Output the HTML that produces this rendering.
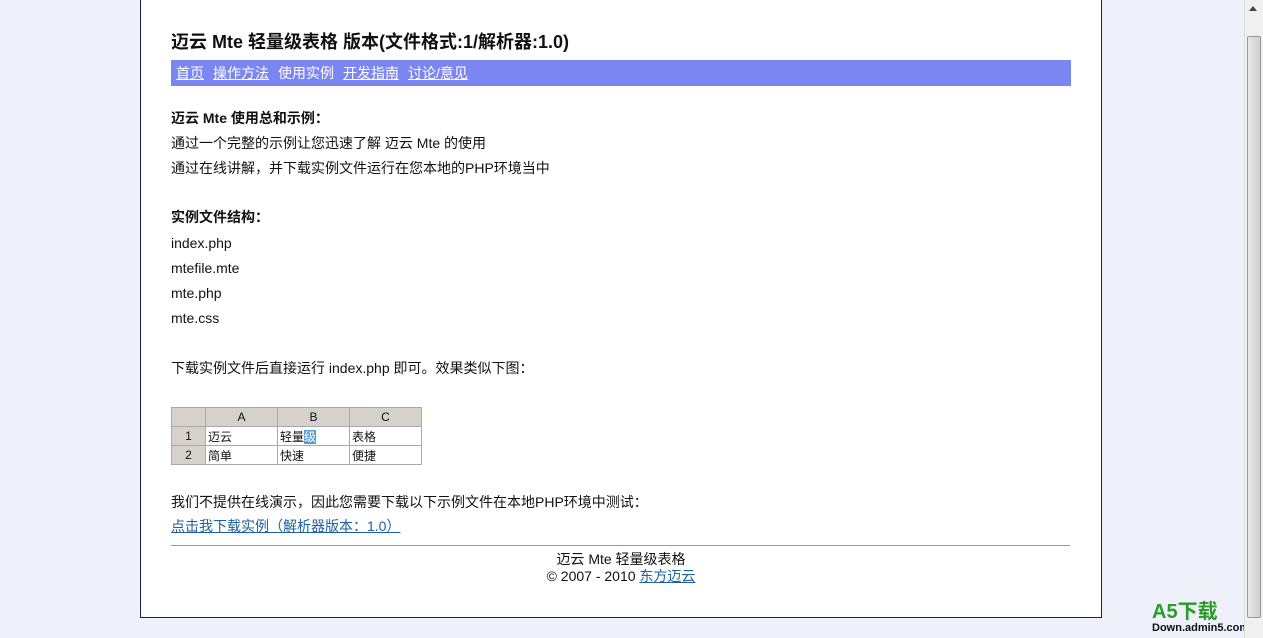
<!DOCTYPE html>
<html><head><meta charset="utf-8"><style>
*{margin:0;padding:0;box-sizing:border-box}
body{width:1263px;height:638px;overflow:hidden;background:#eef0fa;font-family:"Liberation Sans","Noto Sans CJK SC",sans-serif;font-size:14px;color:#111;position:relative}
#box{position:absolute;left:140px;top:-2px;width:962px;height:620px;background:#fff;border:1px solid #1a2060}
.a{position:absolute;left:30px;white-space:nowrap}
h1{font-size:18px;font-weight:bold}
#nav{position:absolute;left:30px;top:61px;width:900px;height:26px;background:#7b86f2;padding:3px 5px;font-size:14px}
#nav a{color:#fff;text-decoration:underline;margin-right:9px}
table{border-collapse:collapse;font-size:12px}
td{border:1px solid #aaa;height:19px;padding:0 2px}
td.h{background:#d6d2cb;text-align:center}
a.l{color:#1d5fa0;text-decoration:underline}
#sb{position:absolute;right:0;top:0;width:19px;height:638px;background:#f0f0f0;border-left:1px solid #ddd}
#th{position:absolute;right:2px;top:36px;width:14px;height:582px;background:linear-gradient(90deg,#e8e8e8,#cfcfcf);border:1px solid #999;border-radius:2px}
</style></head><body>
<div id="box">
<h1 class="a" style="top:29px">迈云 Mte 轻量级表格 版本(文件格式:1/解析器:1.0)</h1>
<div id="nav"><a>首页</a><a>操作方法</a><a style="text-decoration:none">使用实例</a><a>开发指南</a><a>讨论/意见</a></div>
<div class="a" style="top:109px;font-size:14px;font-weight:bold">迈云 Mte 使用总和示例：</div>
<div class="a" style="top:134px">通过一个完整的示例让您迅速了解 迈云 Mte 的使用</div>
<div class="a" style="top:159px">通过在线讲解，并下载实例文件运行在您本地的PHP环境当中</div>
<div class="a" style="top:208px;font-weight:bold">实例文件结构：</div>
<div class="a" style="top:236px">index.php</div>
<div class="a" style="top:261px">mtefile.mte</div>
<div class="a" style="top:286px">mte.php</div>
<div class="a" style="top:311px">mte.css</div>
<div class="a" style="top:359px">下载实例文件后直接运行 index.php 即可。效果类似下图：</div>
<table class="a" style="top:408px">
<tr><td class="h" style="width:34px"></td><td class="h" style="width:72px">A</td><td class="h" style="width:72px">B</td><td class="h" style="width:72px">C</td></tr>
<tr><td class="h">1</td><td>迈云</td><td>轻量<span style="background:#5b9bd5;color:#fff">级</span></td><td>表格</td></tr>
<tr><td class="h">2</td><td>简单</td><td>快速</td><td>便捷</td></tr>
</table>
<div class="a" style="top:493px">我们不提供在线演示，因此您需要下载以下示例文件在本地PHP环境中测试：</div>
<a class="a l" style="top:517px">点击我下载实例（解析器版本：1.0）</a>
<div style="position:absolute;left:30px;top:546px;width:899px;border-top:1px solid #999"></div>
<div style="position:absolute;left:0;width:100%;top:552px;text-align:center;font-size:14px;line-height:17px">迈云 Mte 轻量级表格<br>© 2007 - 2010 <a class="l">东方迈云</a></div>
</div>
<div style="position:absolute;left:1152px;top:602px;color:#2a9a2a;font-weight:bold;font-size:20px;line-height:20px">A5下载</div>
<div style="position:absolute;left:1152px;top:622px;color:#111;font-size:11px;font-weight:bold">Down.admin5.com</div>
<div id="sb"><div style="position:absolute;left:4px;top:6px;border:4px solid transparent;border-bottom:5px solid #444;border-top:0"></div><div id="th"></div></div>
</body></html>
